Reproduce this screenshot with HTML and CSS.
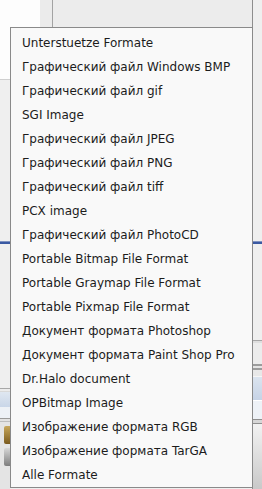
FILE: index.html
```html
<!DOCTYPE html>
<html lang="en">
<head>
    <meta charset="UTF-8">
    <title>Format menu</title>
    <link rel="stylesheet" href="styles.css">
</head>
<body>

    <!-- Backdrop: the dialog behind the open menu -->
    <div class="backdrop">
        <div class="side side-left">
            <div class="l-white"></div>
            <div class="l-grey1"></div>
            <div class="blue-line"></div>
            <div class="l-grey2"></div>
            <div class="l-sep"></div>
            <div class="l-sel"></div>
            <div class="l-light"></div>
            <div class="l-sep2"></div>
            <div class="l-icons">
                <span class="icon icon-a"></span>
                <span class="icon icon-b"></span>
            </div>
        </div>
        <div class="middle">
            <div class="top-white"></div>
            <div class="top-strip"></div>
            <div class="top-panel"></div>
        </div>
        <div class="side side-right">
            <div class="r-grey1"></div>
            <div class="blue-line"></div>
            <div class="r-grey2"></div>
            <div class="r-sep"></div>
            <div class="r-grey3"></div>
            <div class="r-sep double"></div>
            <div class="r-grey4"></div>
            <div class="r-sel"></div>
            <div class="r-light"></div>
            <div class="r-sep2"></div>
            <div class="r-grad"></div>
        </div>
    </div>

    <!-- Popup menu -->
    <ul class="menu">
        <li>Unterstuetze Formate</li>
        <li>Графический файл Windows BMP</li>
        <li>Графический файл gif</li>
        <li>SGI Image</li>
        <li>Графический файл JPEG</li>
        <li>Графический файл PNG</li>
        <li>Графический файл tiff</li>
        <li>PCX image</li>
        <li>Графический файл PhotoCD</li>
        <li>Portable Bitmap File Format</li>
        <li>Portable Graymap File Format</li>
        <li>Portable Pixmap File Format</li>
        <li>Документ формата Photoshop</li>
        <li>Документ формата Paint Shop Pro</li>
        <li>Dr.Halo document</li>
        <li>OPBitmap Image</li>
        <li>Изображение формата RGB</li>
        <li>Изображение формата TarGA</li>
        <li>Alle Formate</li>
    </ul>

</body>
</html>
```

FILE: styles.css
```css
/* General Reset */
* {
    margin: 0;
    padding: 0;
    box-sizing: border-box;
}

body {
    width: 262px;
    height: 489px;
    overflow: hidden;
    position: relative;
    background-color: #efefef;
    font-family: 'DejaVu Sans', 'Noto Sans', sans-serif;
    font-size: 12px;
    color: #1c1c1c;
}

/* Backdrop */
.backdrop {
    display: flex;
    height: 489px;
}

.side {
    display: flex;
    flex-direction: column;
}

.side-left {
    width: 10px;
}

.side-right {
    width: 10px;
    border-left: 1px solid #8e8e8e;
}

.middle {
    flex: 1;
    display: flex;
    align-items: flex-start;
}

.top-white {
    width: 30px;
    height: 80px;
    background-color: #fdfdfd;
}

.top-strip {
    width: 13px;
    height: 80px;
    background-color: #ebebeb;
    border-right: 1px solid #a3a3a3;
}

.top-panel {
    flex: 1;
    height: 80px;
    background-color: #ececec;
}

.blue-line {
    height: 3px;
    background-color: #3a59a2;
    border-top: 1px solid #7f92c0;
}

/* Left strip */
.l-white { height: 80px; background-color: #fdfdfd; border-bottom: 1px solid #cfcfcf; }
.l-grey1 { height: 161px; background-color: #efefef; }
.l-grey2 { height: 144px; background-color: #efefef; }
.l-sep { height: 4px; border-top: 1px solid #a8a8a8; border-bottom: 1px solid #d8d8d8; background-color: #ececec; }
.l-sel { height: 15px; background: linear-gradient(#dfe7f1, #c9d6e8); }
.l-light { height: 11px; background-color: #edf1f6; }
.l-sep2 { height: 4px; border-top: 1px solid #9a9a9a; border-bottom: 1px solid #bdbdbd; background-color: #e2e2e2; }

.l-icons {
    flex: 1;
    display: flex;
    flex-direction: column;
    gap: 4px;
    padding: 4px 0 0 4px;
    background-color: #e4e4e4;
}

.icon {
    display: block;
    width: 6px;
    height: 18px;
    border-radius: 2px 0 0 2px;
}

.icon-a { background: linear-gradient(#c8a85c, #7a5a1e); }
.icon-b { background: linear-gradient(#d6d6d6, #7d7d7d); }

/* Right strip */
.r-grey1 { height: 241px; background-color: #efefef; }
.r-grey2 { height: 96px; background-color: #efefef; }
.r-sep { height: 3px; border-top: 1px solid #a6a6a6; background-color: #dedede; }
.r-sep.double { height: 6px; border-top: 2px solid #9c9c9c; border-bottom: 2px solid #9c9c9c; background-color: #e4e4e4; }
.r-grey3 { height: 21px; background-color: #ececec; }
.r-grey4 { height: 6px; background-color: #e8e8e8; }
.r-sel { height: 24px; background: linear-gradient(#dbe4ef, #c6d3e6); border-top: 1px solid #f5f5f5; }
.r-light { height: 19px; background-color: #eef2f7; border-top: 1px solid #ffffff; }
.r-sep2 { height: 5px; border-top: 1px solid #8f8f8f; border-bottom: 1px solid #8f8f8f; background-color: #d6d6d6; }
.r-grad { flex: 1; background: linear-gradient(#f2f2f2, #c9c9c9); }

/* Popup menu */
.menu {
    position: absolute;
    left: 10px;
    top: 27px;
    width: 243px;
    height: 461px;
    list-style-type: none;
    padding: 3px 0 0 11px;
    background-color: #f9f9f9;
    border: 1px solid #8a8a8a;
}

.menu li {
    height: 24px;
    line-height: 24px;
    white-space: nowrap;
}
```
